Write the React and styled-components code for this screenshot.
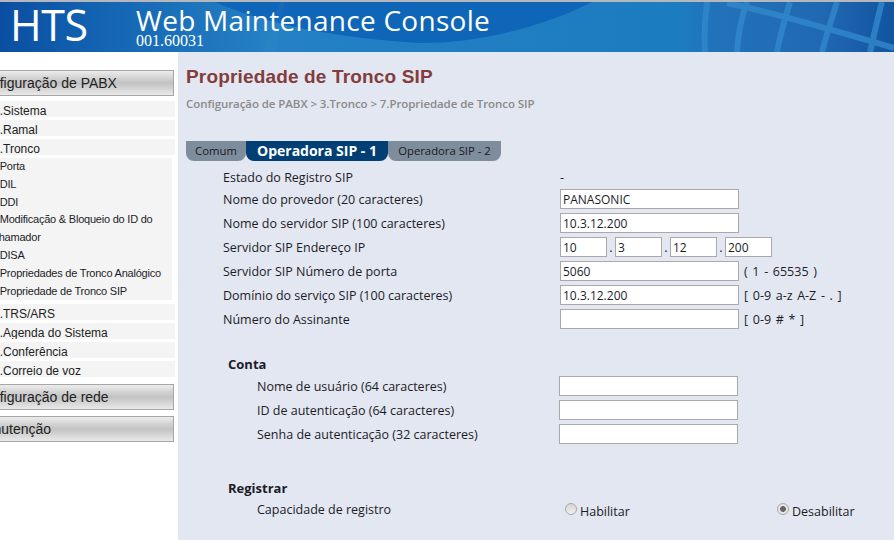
import React from 'react';
import styled, { createGlobalStyle } from 'styled-components';

const GlobalStyle = createGlobalStyle`
  html, body {
    margin: 0;
    padding: 0;
    height: 540px;
    overflow: hidden;
    background: #fff;
  }
`;

const topMenu = ['1.Sistema', '2.Ramal', '3.Tronco'];
const subMenu = [
  '1.Porta',
  '2.DIL',
  '3.DDI',
  '4.Modificação & Bloqueio do ID do Chamador',
  '5.DISA',
  '6.Propriedades de Tronco Analógico',
  '7.Propriedade de Tronco SIP',
];
const bottomMenu = ['4.TRS/ARS', '5.Agenda do Sistema', '6.Conferência', '7.Correio de voz'];

const Page = styled.div`
  width: 894px;
  height: 540px;
  display: flex;
  flex-direction: column;
  overflow: hidden;
  font-family: 'Open Sans', 'Noto Sans', sans-serif;
  color: #1c1c28;
`;

const Header = styled.header`
  position: relative;
  flex: 0 0 52px;
  box-sizing: border-box;
  border-top: 2px solid #b4b8bc;
  display: flex;
  overflow: hidden;
  color: #fff;
`;

const HeaderArt = styled.svg`
  position: absolute;
  inset: 0;
  width: 100%;
  height: 100%;
`;

const Logo = styled.div`
  position: relative;
  width: 126px;
  padding-left: 10px;
  font-size: 43px;
  line-height: 46px;
  letter-spacing: -0.4px;
`;

const TitleBlock = styled.div`
  position: relative;
  display: flex;
  flex-direction: column;
`;

const AppTitle = styled.div`
  font-size: 28px;
  line-height: 32px;
  margin-top: 2px;
  letter-spacing: 0.28px;
  white-space: nowrap;
`;

const Version = styled.div`
  font-family: 'Liberation Serif', serif;
  font-size: 16px;
  line-height: 14px;
  margin-top: -2px;
`;

const Body = styled.div`
  flex: 1;
  display: flex;
  min-height: 0;
`;

const Sidebar = styled.nav`
  flex: 0 0 178px;
  overflow: hidden;
  background: #fff;
  padding-top: 18px;
`;

const SidebarInner = styled.div`
  margin-left: -30px;
  width: 205px;
  display: flex;
  flex-direction: column;
`;

const PanelButton = styled.div`
  box-sizing: border-box;
  height: 26px;
  margin-top: ${(p) => p.$gap || 0}px;
  margin-right: 1px;
  padding-left: 3px;
  border: 1px solid #a6a6a6;
  background: linear-gradient(#ececec, #c2c2c2 50%, #e9e9e9);
  font-family: 'Liberation Sans', sans-serif;
  font-size: 14px;
  line-height: 24px;
  color: #222;
`;

const MenuList = styled.div`
  margin-top: ${(p) => p.$top}px;
  display: flex;
  flex-direction: column;
  gap: 3px;
`;

const MenuItem = styled.div`
  height: 16px;
  padding-left: 23px;
  background: #f4f4f4;
  font-family: 'Liberation Sans', sans-serif;
  font-size: 12px;
  line-height: 20px;
  overflow: hidden;
  color: #222;
`;

const SubList = styled.div`
  margin: 3px 3px 3px 0;
  padding: 0 0 0 21px;
  height: 142px;
  box-sizing: border-box;
  background: #f4f4f4;
  display: flex;
  flex-direction: column;
`;

const SubItem = styled.div`
  font-family: 'Liberation Sans', sans-serif;
  font-size: 11px;
  line-height: 17.8px;
  letter-spacing: -0.22px;
`;

const Main = styled.main`
  flex: 1;
  background: #e3e7f1;
  padding-left: 8px;
  min-width: 0;
`;

const PageTitle = styled.h1`
  margin: 12px 0 0;
  font-family: 'Liberation Sans', sans-serif;
  font-size: 19px;
  line-height: 26px;
  font-weight: bold;
  letter-spacing: 0.16px;
  color: #823d3d;
`;

const Breadcrumb = styled.div`
  margin-top: 5px;
  font-size: 11.5px;
  line-height: 18px;
  font-weight: 600;
  letter-spacing: -0.07px;
  color: #8a8a8a;
`;

const Tabs = styled.div`
  margin-top: 28px;
  display: flex;
`;

const Tab = styled.div`
  box-sizing: border-box;
  width: ${(p) => p.$width}px;
  height: 20px;
  text-align: center;
  border-radius: 0 0 8px 8px;
  background: ${(p) => (p.$active ? '#013f75' : '#7e8d9c')};
  color: ${(p) => (p.$active ? '#fff' : '#1a1a24')};
  font-weight: ${(p) => (p.$active ? 700 : 400)};
  font-size: ${(p) => (p.$active ? '14px' : '11.3px')};
  line-height: 20px;
  white-space: nowrap;
`;

const Form = styled.div`
  padding: 4px 0 0 37px;
  display: flex;
  flex-direction: column;
`;

const Row = styled.div`
  display: flex;
  align-items: center;
  height: ${(p) => p.$height || 20}px;
  margin-bottom: ${(p) => (p.$flush ? 0 : 4)}px;
  font-size: 12.5px;
`;

const Label = styled.div`
  width: ${(p) => p.$width || 337}px;
  padding-left: ${(p) => p.$indent || 0}px;
  flex-shrink: 0;
  box-sizing: border-box;
  white-space: nowrap;
`;

const TextField = styled.input`
  box-sizing: border-box;
  width: ${(p) => p.$width || 179}px;
  height: 20px;
  border: 1px solid #a9a9a9;
  background: #fff;
  padding: 0 2px;
  font-family: inherit;
  font-size: 12px;
  color: #1c1c28;
  outline: none;
`;

const Dot = styled.span`
  width: 8px;
  text-align: center;
`;

const Hint = styled.span`
  margin-left: 5px;
  white-space: nowrap;
  word-spacing: 1.4px;
`;

const SectionTitle = styled.div`
  margin-top: ${(p) => p.$top}px;
  margin-bottom: ${(p) => p.$bottom}px;
  padding-left: 5px;
  height: 18px;
  font-size: 13px;
  line-height: 18px;
  font-weight: 700;
`;

const RadioGroup = styled.label`
  display: flex;
  align-items: center;
  width: ${(p) => p.$width}px;
  padding: 4px 0 0 5px;
  box-sizing: border-box;
  flex-shrink: 0;
`;

const RadioMark = styled.span`
  box-sizing: border-box;
  width: 12px;
  height: 12px;
  margin: -4px 3px 0 0;
  border-radius: 50%;
  border: 1px solid #a8a8a8;
  background: ${(p) =>
    p.$checked
      ? 'radial-gradient(circle, #666 0 2.6px, #e6e6e6 3.2px)'
      : 'linear-gradient(#d6d6d6, #efefef)'};
`;

const providerRows = [
  { label: 'Nome do provedor (20 caracteres)', value: 'PANASONIC' },
  { label: 'Nome do servidor SIP (100 caracteres)', value: '10.3.12.200' },
];

const accountRows = [
  'Nome de usuário (64 caracteres)',
  'ID de autenticação (64 caracteres)',
  'Senha de autenticação (32 caracteres)',
];

const HeaderBackground = () => (
  <HeaderArt viewBox="0 0 894 50" preserveAspectRatio="none">
    <defs>
      <linearGradient id="base" x1="0" x2="1" y1="0" y2="0">
        <stop offset="0" stopColor="#0b4ea1" />
        <stop offset="0.12" stopColor="#1465b3" />
        <stop offset="0.3" stopColor="#2580c4" />
        <stop offset="0.76" stopColor="#1c7cc0" />
        <stop offset="0.8" stopColor="#2272ba" />
        <stop offset="0.92" stopColor="#2068b2" />
        <stop offset="1" stopColor="#12549f" />
      </linearGradient>
    </defs>
    <rect width="894" height="50" fill="url(#base)" />
    <path d="M215 0 C260 20 330 36 420 41 C480 42 550 22 592 0 Z" fill="#0f65b7" />
    <path d="M280 0 L262 50 L276 50 L285 0 Z" fill="#3b8fcc" opacity="0.15" />
    <g fill="none" stroke="#3189ca" strokeWidth="6" opacity="0.8">
      <path d="M707 0 C705 16 704 34 705 50" />
      <path d="M747 0 C741 16 738 34 737 50" />
      <path d="M790 0 C785 16 780 34 777 50" />
      <path d="M837 0 C832 16 826 34 822 50" />
      <path d="M882 0 C878 14 874 34 870 50" />
      <path d="M727 1 C780 12 840 30 894 46" />
    </g>
  </HeaderArt>
);

const App = () => (
  <Page>
    <GlobalStyle />
    <Header>
      <HeaderBackground />
      <Logo>HTS</Logo>
      <TitleBlock>
        <AppTitle>Web Maintenance Console</AppTitle>
        <Version>001.60031</Version>
      </TitleBlock>
    </Header>
    <Body>
      <Sidebar>
        <SidebarInner>
          <PanelButton>Configuração de PABX</PanelButton>
          <MenuList $top={5}>
            {topMenu.map((item) => (
              <MenuItem key={item}>{item}</MenuItem>
            ))}
          </MenuList>
          <SubList>
            {subMenu.map((item) => (
              <SubItem key={item}>{item}</SubItem>
            ))}
          </SubList>
          <MenuList $top={1}>
            {bottomMenu.map((item) => (
              <MenuItem key={item}>{item}</MenuItem>
            ))}
          </MenuList>
          <PanelButton $gap={7}>Configuração de rede</PanelButton>
          <PanelButton $gap={6}>Manutenção</PanelButton>
        </SidebarInner>
      </Sidebar>
      <Main>
        <PageTitle>Propriedade de Tronco SIP</PageTitle>
        <Breadcrumb>Configuração de PABX &gt; 3.Tronco &gt; 7.Propriedade de Tronco SIP</Breadcrumb>
        <Tabs>
          <Tab $width={60}>Comum</Tab>
          <Tab $width={142} $active>
            Operadora SIP - 1
          </Tab>
          <Tab $width={113}>Operadora SIP - 2</Tab>
        </Tabs>
        <Form>
          <Row $height={24} $flush>
            <Label>Estado do Registro SIP</Label>
            <span>-</span>
          </Row>
          {providerRows.map((row) => (
            <Row key={row.label}>
              <Label>{row.label}</Label>
              <TextField readOnly defaultValue={row.value} />
            </Row>
          ))}
          <Row>
            <Label>Servidor SIP Endereço IP</Label>
            <TextField $width={47} readOnly defaultValue="10" />
            <Dot>.</Dot>
            <TextField $width={47} readOnly defaultValue="3" />
            <Dot>.</Dot>
            <TextField $width={47} readOnly defaultValue="12" />
            <Dot>.</Dot>
            <TextField $width={47} readOnly defaultValue="200" />
          </Row>
          <Row>
            <Label>Servidor SIP Número de porta</Label>
            <TextField readOnly defaultValue="5060" />
            <Hint>( 1 - 65535 )</Hint>
          </Row>
          <Row>
            <Label>Domínio do serviço SIP (100 caracteres)</Label>
            <TextField readOnly defaultValue="10.3.12.200" />
            <Hint>[ 0-9 a-z A-Z - . ]</Hint>
          </Row>
          <Row>
            <Label>Número do Assinante</Label>
            <TextField readOnly defaultValue="" />
            <Hint>[ 0-9 # * ]</Hint>
          </Row>
          <SectionTitle $top={22} $bottom={3}>
            Conta
          </SectionTitle>
          {accountRows.map((label) => (
            <Row key={label}>
              <Label $indent={34} $width={336}>
                {label}
              </Label>
              <TextField readOnly defaultValue="" />
            </Row>
          ))}
          <SectionTitle $top={31} $bottom={2}>
            Registrar
          </SectionTitle>
          <Row>
            <Label $indent={34} $width={337}>
              Capacidade de registro
            </Label>
            <RadioGroup $width={212}>
              <RadioMark />
              Habilitar
            </RadioGroup>
            <RadioGroup $width={100}>
              <RadioMark $checked />
              Desabilitar
            </RadioGroup>
          </Row>
        </Form>
      </Main>
    </Body>
  </Page>
);

export default App;
